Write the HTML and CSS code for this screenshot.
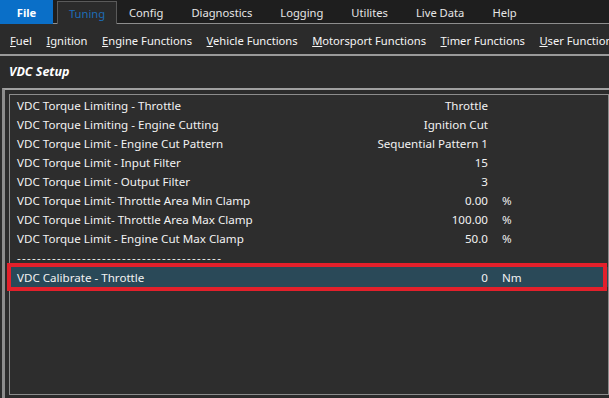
FILE: index.html
```html
<!DOCTYPE html>
<html>
<head>
<meta charset="utf-8">
<link rel="stylesheet" href="styles.css">
</head>
<body>
<div class="menubar">
  <div class="file">File</div>
  <div class="tab active">Tuning</div>
  <div class="tab">Config</div>
  <div class="tab">Diagnostics</div>
  <div class="tab">Logging</div>
  <div class="tab">Utilites</div>
  <div class="tab">Live Data</div>
  <div class="tab">Help</div>
</div>
<div class="submenu">
  <span><u>F</u>uel</span>
  <span><u>I</u>gnition</span>
  <span><u>E</u>ngine Functions</span>
  <span><u>V</u>ehicle Functions</span>
  <span><u>M</u>otorsport Functions</span>
  <span><u>T</u>imer Functions</span>
  <span><u>U</u>ser Functions</span>
</div>
<div class="title">VDC Setup</div>
<div class="outer">
  <div class="inner">
    <div class="row"><span class="lbl">VDC Torque Limiting - Throttle</span><span class="val">Throttle</span><span class="unit"></span></div>
    <div class="row"><span class="lbl">VDC Torque Limiting - Engine Cutting</span><span class="val">Ignition Cut</span><span class="unit"></span></div>
    <div class="row"><span class="lbl">VDC Torque Limit - Engine Cut Pattern</span><span class="val">Sequential Pattern 1</span><span class="unit"></span></div>
    <div class="row"><span class="lbl">VDC Torque Limit - Input Filter</span><span class="val">15</span><span class="unit"></span></div>
    <div class="row"><span class="lbl">VDC Torque Limit - Output Filter</span><span class="val">3</span><span class="unit"></span></div>
    <div class="row"><span class="lbl">VDC Torque Limit- Throttle Area Min Clamp</span><span class="val">0.00</span><span class="unit">%</span></div>
    <div class="row"><span class="lbl">VDC Torque Limit- Throttle Area Max Clamp</span><span class="val">100.00</span><span class="unit">%</span></div>
    <div class="row"><span class="lbl">VDC Torque Limit - Engine Cut Max Clamp</span><span class="val">50.0</span><span class="unit">%</span></div>
    <div class="row"><span class="lbl dashes">-----------------------------------------</span><span class="val"></span><span class="unit"></span></div>
    <div class="row selected"><span class="lbl">VDC Calibrate - Throttle</span><span class="val">0</span><span class="unit">Nm</span><div class="redbox"></div></div>
  </div>
</div>
</body>
</html>
```
FILE: styles.css
```css
html, body {
  margin: 0;
  padding: 0;
  background: #2b2b2b;
  width: 609px;
  height: 398px;
  overflow: hidden;
  font-family: "Noto Sans", "Open Sans", sans-serif;
  font-size: 11.6px;
  color: #f2f2f2;
}
.menubar {
  display: flex;
  align-items: flex-end;
  height: 24px;
  background: #1e1e1e;
  border-bottom: 1px solid #8e8e8e;
  box-sizing: border-box;
  font-size: 11.2px;
  white-space: nowrap;
}
.file {
  flex-shrink: 0;
  width: 53px;
  height: 24px;
  background: #0a6fc8;
  color: #fff;
  font-weight: bold;
  display: flex;
  align-items: center;
  justify-content: center;
  margin-bottom: -1px;
}
.tab {
  flex-shrink: 0;
  height: 22px;
  display: flex;
  align-items: center;
  color: #e6e6e6;
  padding: 0 14px;
}
.tab.active {
  margin-left: 4px;
  width: 60px;
  box-sizing: border-box;
  justify-content: center;
  padding: 0;
  background: #2b2b2b;
  border: 1px solid #5a5a5a;
  border-bottom: none;
  color: #1d6db7;
  margin-right: -2px;
  margin-bottom: -1px;
  height: 23px;
}
.submenu {
  display: flex;
  gap: 14.5px;
  height: 32px;
  align-items: center;
  padding-left: 10px;
  padding-top: 2px;
  border-bottom: 2px solid #9a9a9a;
  box-sizing: border-box;
  white-space: nowrap;
  color: #f5f5f5;
  font-size: 11.2px;
}
.submenu span {
  flex-shrink: 0;
}
.title {
  height: 32px;
  display: flex;
  align-items: center;
  padding-left: 9px;
  padding-bottom: 2px;
  box-sizing: border-box;
  font-weight: bold;
  font-style: italic;
  font-size: 12.5px;
  color: #fff;
}
.outer {
  margin-left: 2px;
  border-top: 2px solid #a0a0a0;
  border-left: 3px solid #8c8c8c;
  padding: 4px 0 2px 4px;
  height: 310px;
  box-sizing: border-box;
}
.inner {
  border: 1px solid #8c8c8c;
  background: #2d2d2d;
  height: 301px;
  box-sizing: border-box;
  padding-top: 1px;
}
.row {
  position: relative;
  display: grid;
  grid-template-columns: 310px 147px 80px;
  column-gap: 14px;
  height: 19px;
  align-items: center;
  padding-left: 7px;
  white-space: nowrap;
}
.dashes {
  letter-spacing: 1.27px;
}
.val {
  text-align: right;
}
.selected {
  background: #2a4958;
  height: 20px;
}
.redbox {
  position: absolute;
  left: -3px;
  right: 1px;
  top: -4px;
  bottom: -4px;
  border: 4px solid #e3202b;
}
```
